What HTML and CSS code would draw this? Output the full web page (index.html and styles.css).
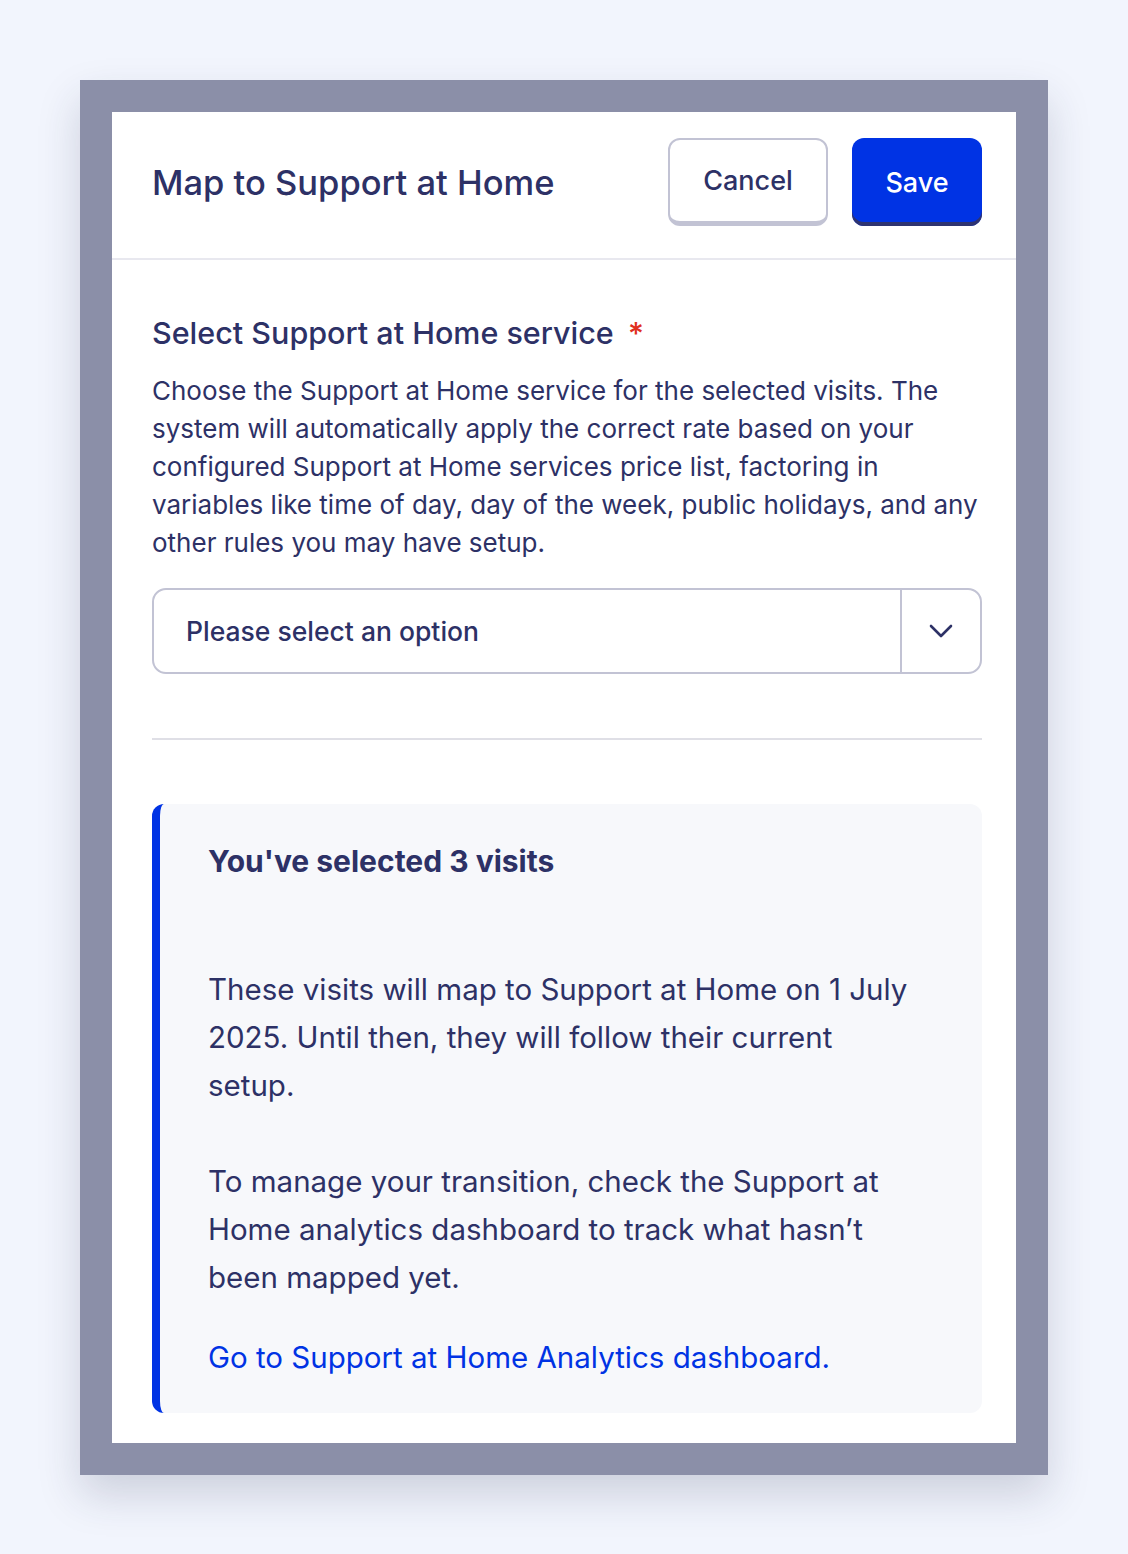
FILE: index.html
```html
<!DOCTYPE html>
<html lang="en">
<head>
    <meta charset="UTF-8">
    <title>Map to Support at Home</title>
    <link rel="stylesheet" href="styles.css">
</head>
<body>
    <div class="frame">
        <div class="modal">
            <div class="modal-header">
                <h1 class="modal-title">Map to Support at Home</h1>
                <div class="actions">
                    <button class="btn btn-secondary">Cancel</button>
                    <button class="btn btn-primary">Save</button>
                </div>
            </div>

            <div class="modal-body">
                <label class="field-label">Select Support at Home service <span class="required">*</span></label>
                <p class="field-help">Choose the Support at Home service for the selected visits. The system will automatically apply the correct rate based on your configured Support at Home services price list, factoring in variables like time of day, day of the week, public holidays, and any other rules you may have setup.</p>

                <div class="select">
                    <span class="select-value">Please select an option</span>
                    <span class="select-toggle">
                        <svg width="24" height="14" viewBox="0 0 24 14"><path d="M2 2 L12 12 L22 2" fill="none" stroke="#2d3166" stroke-width="2.6" stroke-linecap="round" stroke-linejoin="round"/></svg>
                    </span>
                </div>

                <hr class="divider">

                <div class="callout">
                    <h2 class="callout-title">You've selected 3 visits</h2>
                    <p>These visits will map to Support at Home on 1 July 2025. Until then, they will follow their current setup.</p>
                    <p>To manage your transition, check the Support at Home analytics dashboard to track what hasn’t been mapped yet.</p>
                    <a href="#" class="callout-link">Go to Support at Home Analytics dashboard.</a>
                </div>
            </div>
        </div>
    </div>
</body>
</html>
```

FILE: styles.css
```css
body {
    margin: 0;
    padding: 80px;
    background: #f2f5fd;
    font-family: Inter, "Open Sans", sans-serif;
    color: #2d3166;
}
.frame {
    width: 904px;
    padding: 32px;
    background: #8b8fa8;
    box-shadow: 0 20px 40px rgba(40, 44, 80, 0.18);
}
.modal {
    background: #fff;
}
.modal-header {
    display: flex;
    align-items: center;
    justify-content: space-between;
    padding: 26px 34px 32px 40px;
    border-bottom: 2px solid #e8e8ef;
}
.modal-title {
    margin: 0;
    font-size: 34.5px;
    font-weight: 500;
}
.actions {
    display: flex;
    gap: 24px;
}
.btn {
    height: 88px;
    padding: 0;
    border-radius: 12px;
    font-family: inherit;
    font-size: 27px;
    font-weight: 500;
    cursor: pointer;
}
.btn-secondary {
    width: 160px;
    background: #fff;
    color: #2d3166;
    border: 2px solid #c2c3d4;
    border-bottom-width: 5px;
}
.btn-primary {
    width: 130px;
    background: #0033e4;
    color: #fff;
    border: none;
    box-shadow: inset 0 -4px 0 #2e3370;
}
.modal-body {
    padding: 53px 34px 30px 40px;
}
.field-label {
    display: block;
    font-size: 30.5px;
    font-weight: 500;
    line-height: 40px;
}
.required {
    color: #e0301e;
    margin-left: 6px;
}
.field-help {
    margin: 19px 0 26px;
    font-size: 26px;
    line-height: 38px;
}
.select {
    display: flex;
    height: 86px;
    box-sizing: border-box;
    border: 2px solid #c2c3d4;
    border-radius: 14px;
}
.select-value {
    flex: 1;
    display: flex;
    align-items: center;
    padding-left: 32px;
    font-size: 26.5px;
    font-weight: 500;
}
.select-toggle {
    width: 78px;
    display: flex;
    align-items: center;
    justify-content: center;
    border-left: 2px solid #c2c3d4;
}
.divider {
    margin: 64px 0;
    border: none;
    border-top: 2px solid #dfdfe6;
}
.callout {
    background: #f7f8fb;
    border-left: 8px solid #0033e4;
    border-radius: 12px;
    padding: 37px 66px 32px 48px;
}
.callout-title {
    margin: 0 0 84px;
    font-size: 30px;
    font-weight: 700;
    line-height: 40px;
}
.callout p {
    margin: 0 0 48px;
    font-size: 29.5px;
    line-height: 48px;
}
.callout p + p {
    margin-bottom: 32px;
}
.callout-link {
    display: block;
    font-size: 29.5px;
    line-height: 48px;
    color: #0033e4;
    text-decoration: none;
}
```
